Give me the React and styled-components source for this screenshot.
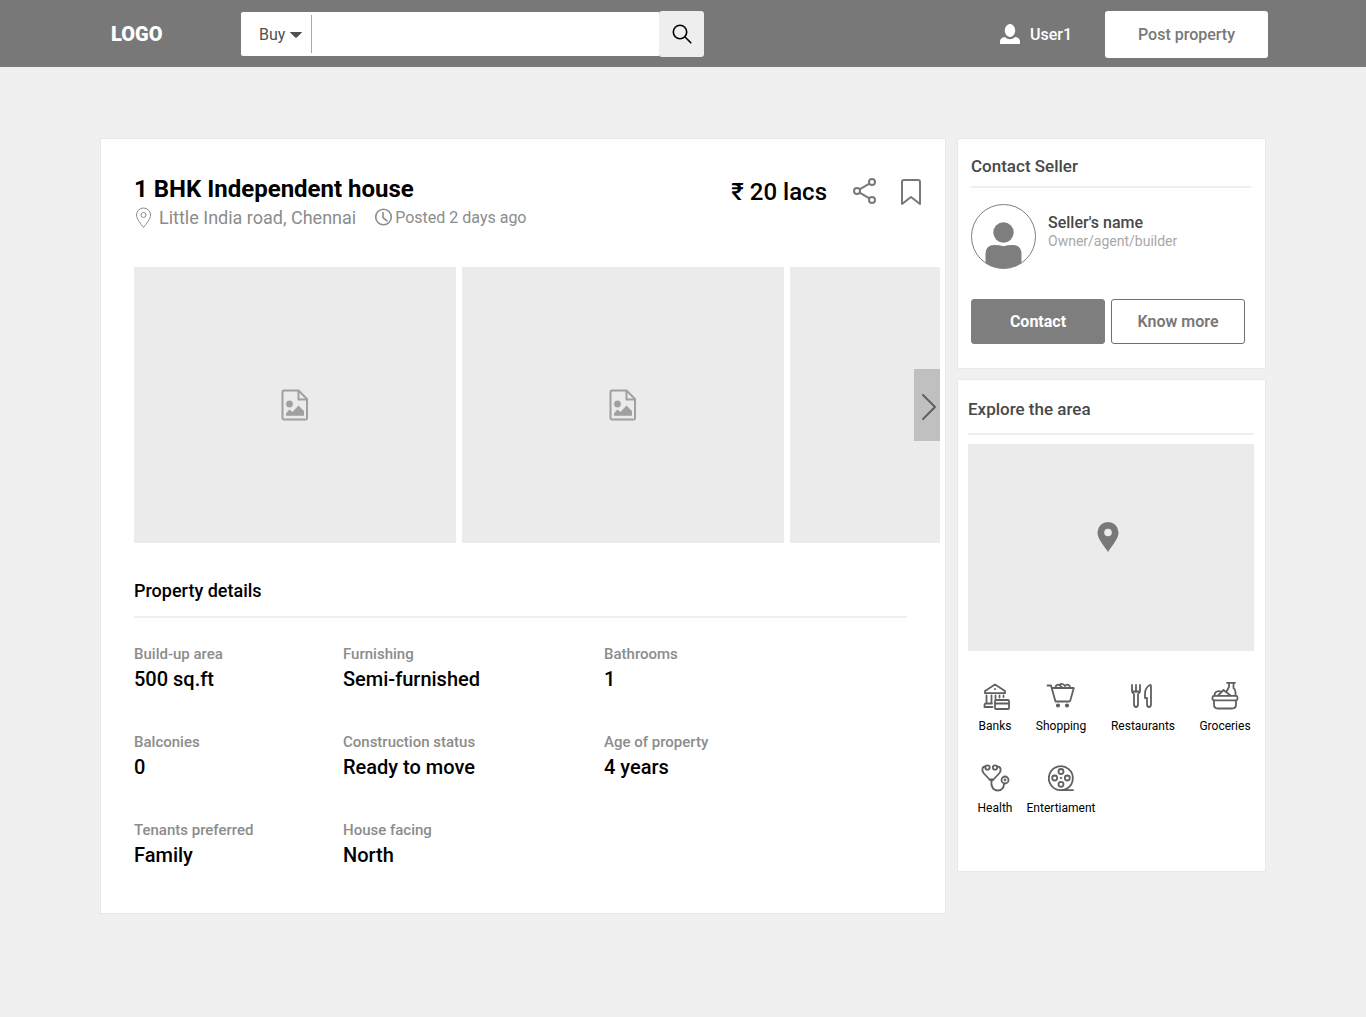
import React from "react";
import styled, { createGlobalStyle } from "styled-components";

const GlobalStyle = createGlobalStyle`
  *, *::before, *::after { box-sizing: border-box; }
  body {
    margin: 0;
    min-height: 100vh;
    background: #f0f0f0;
    color: #000;
    font-family: Roboto, "Liberation Sans", sans-serif;
  }
  h1, h2, p, dl, dt, dd, ul { margin: 0; padding: 0; }
  button, input, select { font: inherit; }
  button { cursor: pointer; }
  svg { display: block; flex: none; }
`;

const Header = styled.header`
  display: flex;
  align-items: center;
  height: 67px;
  padding: 1px 98px 0 111px;
  background: #787878;
`;

const Logo = styled.a`
  width: 130px;
  flex: none;
  color: #fff;
  font-size: 20px;
  font-weight: 900;
  line-height: 24px;
  text-decoration: none;
`;

const Search = styled.form`
  display: flex;
  align-items: center;
  flex: 0 1 463px;
  min-width: 0;
`;

const SearchField = styled.div`
  display: flex;
  align-items: center;
  flex: 1;
  min-width: 0;
  height: 44px;
  background: #fff;
  border-radius: 2px 0 0 2px;
`;

const ModePicker = styled.label`
  position: relative;
  width: 71px;
  height: 38px;
  flex: none;
  border-right: 1px solid #a8a8a8;
`;

const ModeSelect = styled.select`
  width: 100%;
  height: 100%;
  padding: 1px 0 0 18px;
  appearance: none;
  border: 0;
  background: transparent;
  color: #505050;
  font-size: 16px;
`;

const Caret = styled.svg`
  position: absolute;
  top: 17px;
  right: 9px;
  pointer-events: none;
`;

const SearchInput = styled.input`
  flex: 1;
  min-width: 0;
  height: 38px;
  padding: 0 12px;
  border: 0;
  outline: 0;
  background: transparent;
  font-size: 16px;
`;

const SearchButton = styled.button`
  display: flex;
  align-items: center;
  justify-content: center;
  width: 45px;
  height: 46px;
  flex: none;
  padding: 0;
  border: 0;
  border-radius: 3px;
  background: #eee;
`;

const UserLink = styled.a`
  display: flex;
  align-items: center;
  gap: 10px;
  margin: 0 33px 0 auto;
  color: #fff;
  font-size: 16px;
  font-weight: 500;
  text-decoration: none;
`;

const PostButton = styled.button`
  width: 163px;
  height: 47px;
  padding: 0;
  border: 0;
  border-radius: 3px;
  background: #fff;
  color: #787878;
  font-size: 16px;
  font-weight: 500;
`;

const Page = styled.main`
  display: grid;
  grid-template-columns: minmax(0, 1fr) 309px;
  align-items: start;
  gap: 11px;
  padding: 71px 100px;
`;

const Card = styled.section`
  border: 1px solid #e8e8e8;
  background: #fff;
`;

const Listing = styled(Card)`
  padding: 36px 0 45px 33px;
`;

const ListingHead = styled.div`
  display: flex;
  align-items: flex-start;
  justify-content: space-between;
  padding-right: 22px;
`;

const Title = styled.h1`
  font-size: 24px;
  font-weight: 700;
  line-height: 28px;
`;

const Meta = styled.div`
  display: flex;
  align-items: center;
  gap: 18px;
  height: 30px;
  color: #8c8c8c;
`;

const MetaItem = styled.p`
  display: flex;
  align-items: center;
  gap: ${(p) => p.$gap};
  font-size: ${(p) => p.$size};
  line-height: 24px;
`;

const Actions = styled.div`
  display: flex;
  align-items: center;
  gap: 20px;
  height: 34px;
`;

const Price = styled.p`
  margin-right: 4px;
  font-size: 24px;
  font-weight: 500;
  line-height: 28px;
`;

const IconButton = styled.button`
  display: flex;
  padding: 0;
  border: 0;
  background: none;
`;

const Gallery = styled.div`
  position: relative;
  margin: 34px 5px 0 0;
`;

const Photos = styled.div`
  display: flex;
  gap: 6px;
  overflow: hidden;
`;

const Photo = styled.div`
  display: flex;
  align-items: center;
  justify-content: center;
  width: 322px;
  height: 276px;
  flex: none;
  background: #ebebeb;
`;

const NextButton = styled.button`
  position: absolute;
  top: 102px;
  right: 0;
  display: flex;
  align-items: center;
  justify-content: flex-end;
  width: 26px;
  height: 72px;
  padding: 4px 3px 0 0;
  border: 0;
  background: #c0c0c0;
`;

const DetailsTitle = styled.h2`
  margin: 36px 38px 24px 0;
  padding-bottom: 13px;
  border-bottom: 2px solid #eee;
  font-size: 18px;
  font-weight: 500;
  line-height: 24px;
`;

const Details = styled.dl`
  display: grid;
  grid-template-columns: 209px 261px 1fr;
  row-gap: 38px;
`;

const Detail = styled.div`
  dt {
    color: #8c8c8c;
    font-size: 15px;
    font-weight: 500;
    line-height: 24px;
  }
  dd {
    font-size: 20px;
    font-weight: 500;
    line-height: 26px;
  }
`;

const Sidebar = styled.aside`
  display: grid;
  gap: 10px;
`;

const ContactCard = styled(Card)`
  padding: 15px 14px 24px 13px;
`;

const SideTitle = styled.h2`
  padding-bottom: ${(p) => p.$space};
  border-bottom: 2px solid #eee;
  color: #484848;
  font-size: 17px;
  font-weight: 500;
  line-height: 24px;
`;

const Seller = styled.div`
  display: flex;
  align-items: flex-start;
  gap: 12px;
  padding: 16px 0 30px;
`;

const SellerText = styled.div`
  padding-top: 10px;
`;

const SellerName = styled.p`
  color: #484848;
  font-size: 16px;
  font-weight: 500;
  line-height: 18px;
`;

const SellerRole = styled.p`
  color: #a8a8a8;
  font-size: 14px;
  line-height: 18px;
`;

const ButtonRow = styled.div`
  display: flex;
  gap: 6px;
`;

const SellerButton = styled.button`
  width: 134px;
  height: 45px;
  padding: 0;
  border: 1px solid ${(p) => (p.$filled ? "#7e7e7e" : "#707070")};
  border-radius: 3px;
  background: ${(p) => (p.$filled ? "#7e7e7e" : "#fff")};
  color: ${(p) => (p.$filled ? "#fff" : "#787878")};
  font-size: 16px;
  font-weight: ${(p) => (p.$filled ? 700 : 600)};
`;

const AreaCard = styled(Card)`
  padding: 17px 0 50px;
`;

const AreaTop = styled.div`
  padding: 0 11px 0 10px;
`;

const MapBox = styled.div`
  display: flex;
  align-items: center;
  justify-content: center;
  height: 207px;
  margin-top: 9px;
  padding: 0 6px 22px 0;
  background: #ebebeb;
`;

const Places = styled.ul`
  display: grid;
  grid-template-columns: minmax(0, 72fr) minmax(0, 60fr) minmax(0, 104fr) minmax(0, 60fr);
  row-gap: 23px;
  padding: 29px 10px 0 1px;
  list-style: none;
`;

const Place = styled.li`
  display: flex;
  justify-content: center;
`;

const PlaceLink = styled.a`
  display: flex;
  flex-direction: column;
  align-items: center;
  gap: 1px;
  color: #000;
  font-size: 12px;
  line-height: 26px;
  white-space: nowrap;
  text-decoration: none;
`;

const PlaceIcon = styled.svg`
  width: 32px;
  height: 32px;
  fill: none;
  stroke: #606060;
  stroke-width: 1.8;
  stroke-linecap: round;
  stroke-linejoin: round;
`;

const ImageIcon = () => (
  <svg width="28" height="32" viewBox="0 0 28 32" fill="none" stroke="#a0a0a0" strokeWidth="2" strokeLinejoin="round">
    <path d="M3 1.5h14.5l8.5 8.5v19q0 1.5-1.5 1.5h-21Q1.500 30.500 1.500 29V3q0-1.500 1.500-1.500Z" />
    <path d="M17.500 2v8.500H26" />
    <circle cx="8.500" cy="15" r="3.400" fill="#a0a0a0" stroke="none" />
    <path d="M5 26.800v-2.600l3.500-3.700 3 2.500 6-6.500 5.500 5.500v4.800Z" fill="#a0a0a0" stroke="none" />
  </svg>
);

const places = [
  {
    name: "Banks",
    icon: (
      <PlaceIcon viewBox="-3 0 32 32">
        <path d="M13 4.500 3 11v2.200h20V11Z M13 9v.2" />
        <path d="M4.500 15.500v8M9.500 15.500v8M13.500 15.500v3M17.500 15.500v2M21.500 15.500v1.500M10 23.500H4q-1.500 0-1.500 1.500v2h8" />
        <rect x="13" y="20" width="14" height="9" rx="1" />
        <path d="M13 23.500h14" />
      </PlaceIcon>
    ),
  },
  {
    name: "Shopping",
    icon: (
      <PlaceIcon viewBox="0 0 32 32">
        <path d="M2.500 5.500H6l4.500 16H24q1 0 1.300-1L28.800 8H7" />
        <path d="M10.500 7.500c0-2.500 3-4 5-1.500l1.500 1.500M14.500 5c2-2 4-1 5.500 1 2-2.500 5-1 5 1.500" />
        <circle cx="13" cy="25.500" r="1.200" fill="#606060" />
        <circle cx="22" cy="25.500" r="1.200" fill="#606060" />
      </PlaceIcon>
    ),
  },
  {
    name: "Restaurants",
    icon: (
      <PlaceIcon viewBox="3 0 32 32">
        <path d="M8 5v6q0 2 2 3v10q0 3 2 3t2-3V14q2-1 2-3V5M12 5v7M9 11.500h6" />
        <path d="M26 5c-4 2-5 6-5 9v4h2v6q0 3 2 3t2-3V6q0-1-1-1Z" />
      </PlaceIcon>
    ),
  },
  {
    name: "Groceries",
    icon: (
      <PlaceIcon viewBox="0 0 32 32">
        <rect x="3.500" y="15.800" width="25" height="4.500" rx="1.500" />
        <path d="M5 20.500v4q0 4 4 4h14q4 0 4-4v-4" />
        <path d="M5.500 15.500c0-4 4-5.500 7-3.500M9 15.500l5.500-5.500 7 5.500M18 2.800h8M20 3v4l-2.500 4.500M24.500 3v5q2 1.500 2 4v3.500" />
      </PlaceIcon>
    ),
  },
  {
    name: "Health",
    icon: (
      <PlaceIcon viewBox="0 0 32 32">
        <circle cx="8.500" cy="5.500" r="2.200" />
        <circle cx="16" cy="5.500" r="2.200" />
        <path d="M6.500 4.500C3 4.500 2.500 8 4.500 11l6 6.500q2 2 4 0l6-6.500c2-3 1.500-6.500-2.500-6.500M12.500 18.500c-1 6 2 10 6 10 5 0 6.500-3 6.500-7M10.500 17.500h4" />
        <circle cx="26" cy="18" r="3.500" />
        <circle cx="26" cy="18" r=".5" />
      </PlaceIcon>
    ),
  },
  {
    name: "Entertiament",
    icon: (
      <PlaceIcon viewBox="0 0 32 32">
        <path d="M16 28.200a12 12 0 1 1 6-1.700q-2 1.700-6 1.700h12" />
        <circle cx="16" cy="9.500" r="2.500" />
        <circle cx="9.700" cy="16" r="2.500" />
        <circle cx="22.300" cy="16" r="2.500" />
        <circle cx="16" cy="22.300" r="2.500" />
        <circle cx="16" cy="16" r=".4" />
      </PlaceIcon>
    ),
  },
];

const details = [
  ["Build-up area", "500 sq.ft"],
  ["Furnishing", "Semi-furnished"],
  ["Bathrooms", "1"],
  ["Balconies", "0"],
  ["Construction status", "Ready to move"],
  ["Age of property", "4 years"],
  ["Tenants preferred", "Family"],
  ["House facing", "North"],
];

export default function App() {
  return (
    <>
      <GlobalStyle />
      <Header>
        <Logo href="#">LOGO</Logo>
        <Search role="search" onSubmit={(e) => e.preventDefault()}>
          <SearchField>
            <ModePicker>
              <ModeSelect aria-label="Listing type" defaultValue="Buy">
                <option>Buy</option>
                <option>Rent</option>
              </ModeSelect>
              <Caret width="12" height="6" viewBox="0 0 12 6">
                <path d="M0.500 0h11q.8 0 .2.800L7 5.300q-1 1-2 0L.3.800Q-.3 0 .5 0Z" fill="#505050" />
              </Caret>
            </ModePicker>
            <SearchInput type="text" aria-label="Search properties" />
          </SearchField>
          <SearchButton type="submit" aria-label="Search">
            <svg width="20" height="20" viewBox="0 0 20 20" fill="none" stroke="#000" strokeWidth="1.600" strokeLinecap="round">
              <circle cx="8" cy="8" r="6.700" />
              <path d="m12.800 12.800 6 6" />
            </svg>
          </SearchButton>
        </Search>
        <UserLink href="#">
          <svg width="20" height="20" viewBox="0 0 20 20" fill="#fff">
            <ellipse cx="10" cy="6.500" rx="5.200" ry="6.500" />
            <path d="M0 20v-2.500q0-4 5-4.500 2 2.300 5 2.300t5-2.300q5 .5 5 4.500V20Z" />
          </svg>
          User1
        </UserLink>
        <PostButton type="button">Post property</PostButton>
      </Header>

      <Page>
        <Listing>
          <ListingHead>
            <div>
              <Title>1 BHK Independent house</Title>
              <Meta>
                <MetaItem $size="18px" $gap="6px">
                  <svg width="19" height="22" viewBox="0 0 19 22" fill="none" stroke="#8c8c8c">
                    <path d="M9.500 20.500C7 17 2.500 12 2.500 8a7 7 0 0 1 14 0c0 4-4.500 9-7 12.500Z" />
                    <circle cx="9.500" cy="8" r="2.500" />
                  </svg>
                  Little India road, Chennai
                </MetaItem>
                <MetaItem $size="16px" $gap="2px">
                  <svg width="19" height="20" viewBox="0 0 19 20" fill="none" stroke="#8c8c8c" strokeWidth="1.600" strokeLinecap="round">
                    <circle cx="9.500" cy="9" r="7.800" />
                    <path d="M9 4.500v5l4 3.300" />
                  </svg>
                  Posted 2 days ago
                </MetaItem>
              </Meta>
            </div>
            <Actions>
              <Price>₹ 20 lacs</Price>
              <IconButton type="button" aria-label="Share">
                <svg width="28" height="28" viewBox="0 0 28 28" fill="none" stroke="#787878" strokeWidth="2">
                  <circle cx="6" cy="13" r="3" />
                  <circle cx="21" cy="4" r="3" />
                  <circle cx="21" cy="22" r="3" />
                  <path d="m8.600 11.400 9.800-5.800M8.600 14.600l9.800 5.800" />
                </svg>
              </IconButton>
              <IconButton type="button" aria-label="Save">
                <svg width="24" height="28" viewBox="0 0 24 28" fill="none" stroke="#787878" strokeWidth="2" strokeLinejoin="round">
                  <path d="M3 26V4q0-2 2-2h14q2 0 2 2v22l-9-7Z" />
                </svg>
              </IconButton>
            </Actions>
          </ListingHead>

          <Gallery>
            <Photos>
              <Photo><ImageIcon /></Photo>
              <Photo><ImageIcon /></Photo>
              <Photo />
            </Photos>
            <NextButton type="button" aria-label="Next photo">
              <svg width="16" height="28" viewBox="0 0 16 28" fill="none" stroke="#606060" strokeWidth="2" strokeLinecap="round" strokeLinejoin="round">
                <path d="m2 2 12 12L2 26" />
              </svg>
            </NextButton>
          </Gallery>

          <DetailsTitle>Property details</DetailsTitle>
          <Details>
            {details.map(([label, value]) => (
              <Detail key={label}>
                <dt>{label}</dt>
                <dd>{value}</dd>
              </Detail>
            ))}
          </Details>
        </Listing>

        <Sidebar>
          <ContactCard>
            <SideTitle $space="8px">Contact Seller</SideTitle>
            <Seller>
              <svg width="65" height="65" viewBox="0 0 65 65">
                <clipPath id="avatar"><circle cx="32.500" cy="32.500" r="32" /></clipPath>
                <circle cx="32.500" cy="32.500" r="32" fill="#fff" stroke="#7e7e7e" />
                <g fill="#7e7e7e" clipPath="url(#avatar)">
                  <circle cx="32.500" cy="28.500" r="10.200" />
                  <path d="M14.500 65V50q0-9 9-9 5 0 9 1.200 4-1.200 9-1.200 9 0 9 9v15Z" />
                </g>
              </svg>
              <SellerText>
                <SellerName>Seller's name</SellerName>
                <SellerRole>Owner/agent/builder</SellerRole>
              </SellerText>
            </Seller>
            <ButtonRow>
              <SellerButton type="button" $filled>Contact</SellerButton>
              <SellerButton type="button">Know more</SellerButton>
            </ButtonRow>
          </ContactCard>

          <AreaCard>
            <AreaTop>
              <SideTitle $space="12px">Explore the area</SideTitle>
              <MapBox>
                <svg width="22" height="30" viewBox="0 0 22 30">
                  <path d="M11 0a10.500 10.500 0 0 1 10.500 10.500C21.500 17 15 23.500 11 30 7 23.500.5 17 .5 10.500A10.500 10.500 0 0 1 11 0Zm0 6.700a3.800 3.800 0 1 0 0 7.600 3.800 3.800 0 0 0 0-7.600Z" fill="#787878" />
                </svg>
              </MapBox>
            </AreaTop>
            <Places>
              {places.map(({ name, icon }) => (
                <Place key={name}>
                  <PlaceLink href="#">
                    {icon}
                    <span>{name}</span>
                  </PlaceLink>
                </Place>
              ))}
            </Places>
          </AreaCard>
        </Sidebar>
      </Page>
    </>
  );
}
